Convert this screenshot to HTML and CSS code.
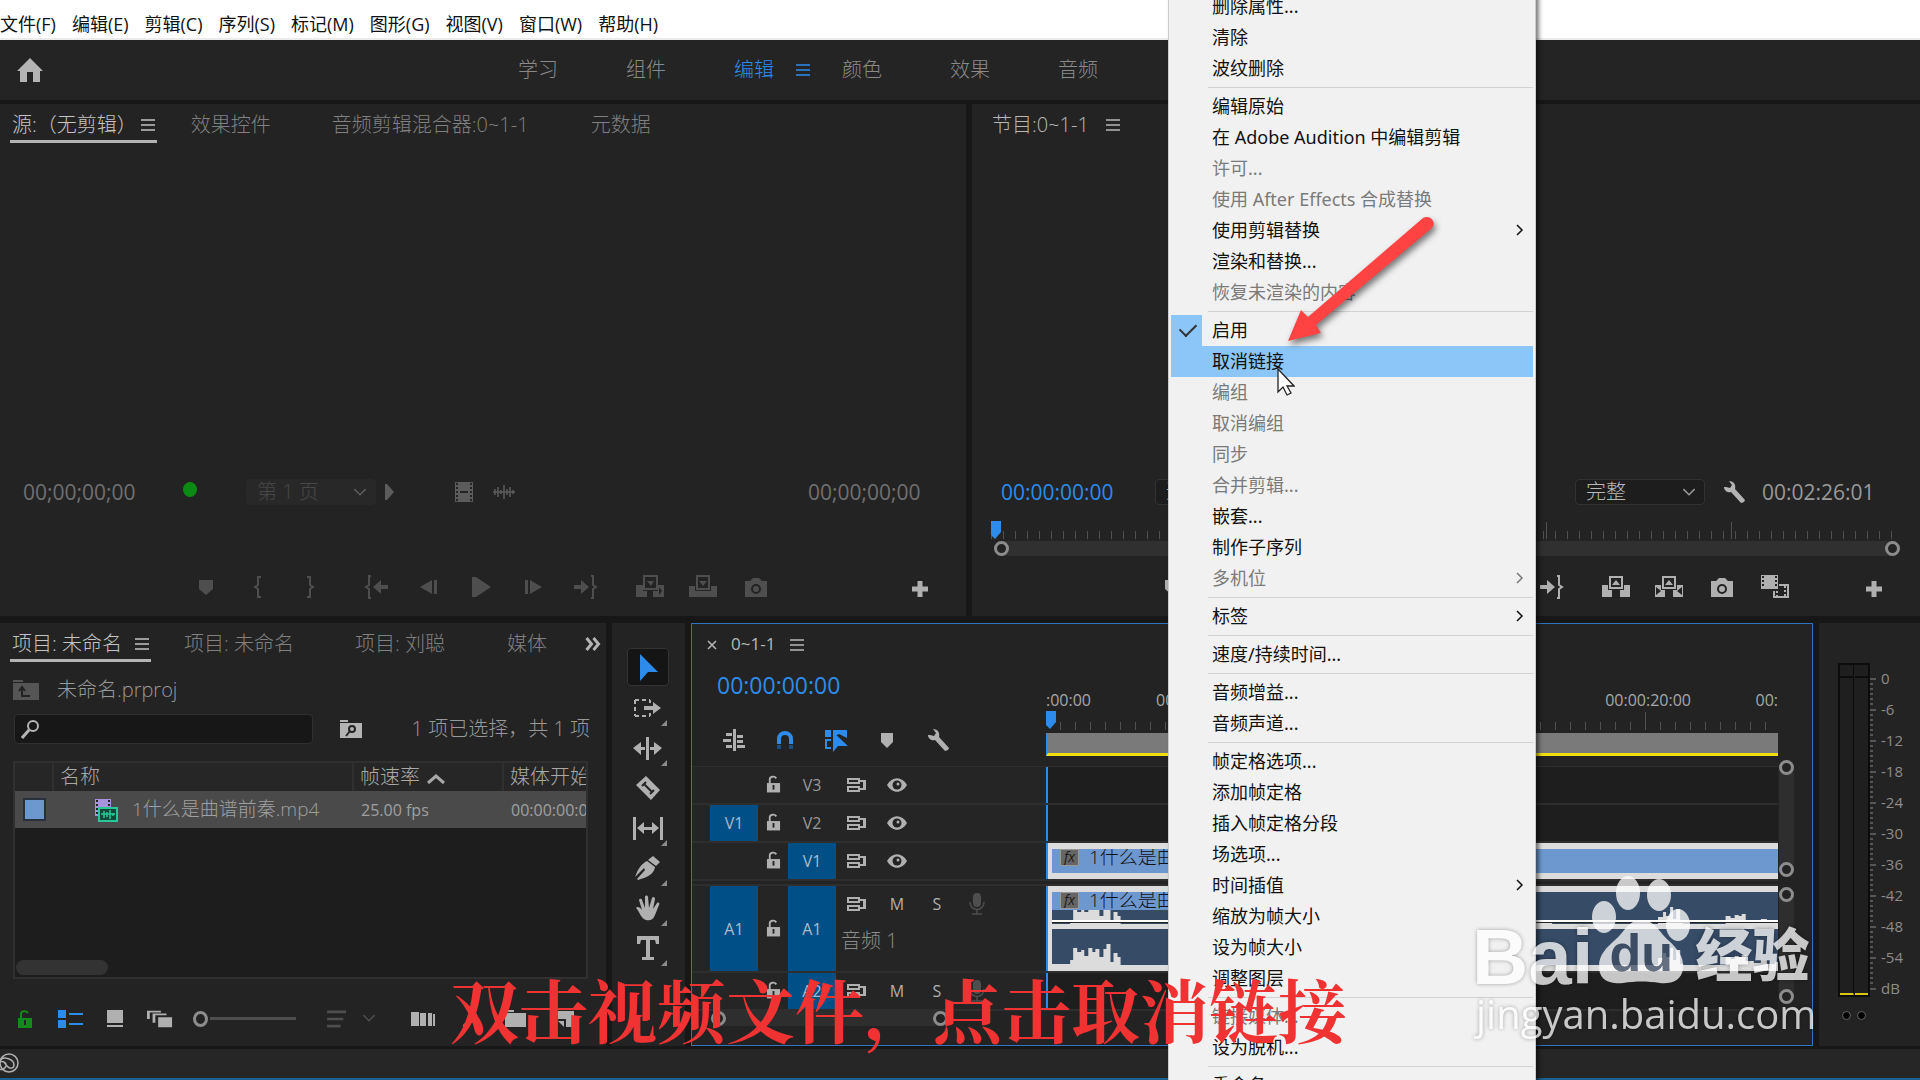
FILE: index.html
```html
<!DOCTYPE html>
<html lang="zh-CN">
<head>
    <meta charset="UTF-8">
    <meta name="viewport" content="width=device-width, initial-scale=1.0">
    <title>未命名.prproj</title>
    <link rel="stylesheet" href="styles.css">
</head>
<body>

<!-- 图标 -->
<svg class="symbols" aria-hidden="true">
    <symbol id="i-menu" viewBox="0 0 14 14"><path d="M0 2h14M0 7h14M0 12h14" stroke="currentColor" stroke-width="1.500"/></symbol>
    <symbol id="i-chev" viewBox="0 0 12 8"><path d="M1 1l5 5 5-5" fill="none" stroke="currentColor" stroke-width="1.3"/></symbol>
    <symbol id="i-sub" viewBox="0 0 8 12"><path d="M1 1l5 5-5 5" fill="none" stroke="currentColor" stroke-width="1.5"/></symbol>
    <symbol id="i-marker" viewBox="0 0 30 24"><path d="M8 5h14v9l-7 6-7-6z" fill="currentColor"/></symbol>
    <symbol id="i-in" viewBox="0 0 30 24"><path d="M18 2h-3v8l-3 2 3 2v8h3" fill="none" stroke="currentColor" stroke-width="2"/></symbol>
    <symbol id="i-out" viewBox="0 0 30 24"><path d="M12 2h3v8l3 2-3 2v8h-3" fill="none" stroke="currentColor" stroke-width="2"/></symbol>
    <symbol id="i-goin" viewBox="0 0 30 24"><path d="M9 1H7v9l-3 2 3 2v9h2" fill="none" stroke="currentColor" stroke-width="2"/><path d="M11 12l8-7v5h7v4h-7v5z" fill="currentColor"/></symbol>
    <symbol id="i-goout" viewBox="0 0 30 24"><path d="M21 1h2v9l3 2-3 2v9h-2" fill="none" stroke="currentColor" stroke-width="2"/><path d="M19 12l-8-7v5H4v4h7v5z" fill="currentColor"/></symbol>
    <symbol id="i-back" viewBox="0 0 30 24"><path d="M6 12l12-7v14zM20 5h3v14h-3z" fill="currentColor"/></symbol>
    <symbol id="i-play" viewBox="0 0 30 24"><path d="M6 2h4l15 10-15 10H6z" fill="currentColor"/></symbol>
    <symbol id="i-fwd" viewBox="0 0 30 24"><path d="M24 12L12 5v14zM7 5h3v14H7z" fill="currentColor"/></symbol>
    <symbol id="i-insert" viewBox="0 0 30 24"><path d="M9 1h13v13H9z" fill="none" stroke="currentColor" stroke-width="2"/><path d="M1 10h7v6h4v6H1zM18 16h5v-6h6v12H18zM12 6h7l-3 5z" fill="currentColor"/><path d="M24 12l3 4-3 4z" class="hole"/></symbol>
    <symbol id="i-over" viewBox="0 0 30 24"><path d="M9 1h12v13H9z" fill="none" stroke="currentColor" stroke-width="2"/><path d="M1 11h6v5h16v-5h6v11H1zM11 6h8l-4 5z" fill="currentColor"/></symbol>
    <symbol id="i-lift" viewBox="0 0 30 24"><path d="M9 2h12v11H9z" fill="none" stroke="currentColor" stroke-width="2"/><path d="M1 10h6v5h4v7H1zM23 10h6v12H19v-7h4zM11 10h8l-4-5z" fill="currentColor"/></symbol>
    <symbol id="i-extract" viewBox="0 0 30 24"><path d="M9 2h12v11H9z" fill="none" stroke="currentColor" stroke-width="2"/><path d="M1 10h6v5h4v7H1zM23 10h6v12H19v-7h4zM11 10h8l-4-5z" fill="currentColor"/><path d="M2 12l5 4-5 4zM28 12l-5 4 5 4z" class="hole"/></symbol>
    <symbol id="i-camera" viewBox="0 0 30 24"><path d="M4 6h5l3-3h6l3 3h5v16H4z" fill="currentColor"/><circle cx="15" cy="14" r="4" class="hole-ring"/></symbol>
    <symbol id="i-compare" viewBox="0 0 30 24"><path d="M1 0h17v14H1z" fill="currentColor"/><path d="M3 1v12M16 1v12" class="hole-dash"/><path d="M19 10h9v12H14v-6" fill="none" stroke="currentColor" stroke-width="2"/><path d="M17 16v6M25 11v11" stroke="currentColor" stroke-width="2" stroke-dasharray="2 2"/></symbol>
    <symbol id="i-plus" viewBox="0 0 30 24"><path d="M7 14h16M15 6v16" stroke="currentColor" stroke-width="5"/></symbol>
    <symbol id="i-wrench" viewBox="0 0 24 24"><path d="M2 7c0 4 4 6 7 5l10 11 3-1 1-2L13 9c1-4-1-8-6-8l3 4-2 3-4-1z" fill="currentColor"/></symbol>
    <symbol id="i-lock" viewBox="0 0 16 18"><path d="M1 8h14v10H1z" fill="currentColor"/><path d="M4 9V4c0-3 5-4 7-1" fill="none" stroke="currentColor" stroke-width="2"/><path d="M8 10v5" class="hole-line"/></symbol>
    <symbol id="i-sync" viewBox="0 0 20 16"><path d="M1 2h11v4H1zM1 10h11v4H1zM12 4h3M12 12h3" fill="none" stroke="currentColor" stroke-width="2"/><path d="M13 3h6v10h-6v-2h3V5h-3z" fill="currentColor"/></symbol>
    <symbol id="i-eye" viewBox="0 0 20 14"><path d="M0 7c5-9 15-9 20 0-5 9-15 9-20 0z" fill="currentColor"/><circle cx="10" cy="7" r="4.500" class="hole"/><circle cx="11" cy="6" r="1.500" fill="currentColor"/></symbol>
    <symbol id="i-mic" viewBox="0 0 16 22"><rect x="4" y="0" width="8" height="14" rx="4" fill="currentColor"/><path d="M1 9c0 10 14 10 14 0M8 17v4M3 21h10" fill="none" stroke="currentColor" stroke-width="1.500"/></symbol>
    <symbol id="i-mag" viewBox="0 0 20 20"><circle cx="12" cy="7" r="5" fill="none" stroke="currentColor" stroke-width="2"/><path d="M8 11l-7 8" stroke="currentColor" stroke-width="3"/></symbol>
</svg>

<nav class="menubar">
    <button>文件(F)</button>
    <button>编辑(E)</button>
    <button>剪辑(C)</button>
    <button>序列(S)</button>
    <button>标记(M)</button>
    <button>图形(G)</button>
    <button>视图(V)</button>
    <button>窗口(W)</button>
    <button>帮助(H)</button>
</nav>

<header class="workspaces">
    <button class="home" aria-label="主页"><svg viewBox="0 0 28 24"><path d="M14 0L1 13h3v11h7V14h6v10h7V13h3z" fill="currentColor"/></svg></button>
    <div class="ws-list">
        <button>学习</button>
        <button>组件</button>
        <button class="on">编辑<svg class="ham"><use href="#i-menu"/></svg></button>
        <button>颜色</button>
        <button>效果</button>
        <button>音频</button>
    </div>
</header>

<main>
    <div class="upper">
        <!-- 源监视器 -->
        <section class="panel monitor">
            <div class="tabs">
                <button class="tab on">源:（无剪辑）<svg class="ham"><use href="#i-menu"/></svg></button>
                <button class="tab t-fx">效果控件</button>
                <button class="tab t-mix">音频剪辑混合器:0~1-1</button>
                <button class="tab t-meta">元数据</button>
            </div>
            <div class="screen"></div>
            <div class="info off">
                <span class="tc">00;00;00;00</span>
                <span class="led"></span>
                <div class="pick dim">
                    <select aria-label="页"><option>第 1 页</option></select>
                    <svg class="chev"><use href="#i-chev"/></svg>
                </div>
                <svg class="tri" viewBox="0 0 9 16"><path d="M0 0h2l7 8-7 8H0z" fill="currentColor"/></svg>
                <svg class="film" viewBox="0 0 18 20"><path d="M0 0h18v20H0z" fill="currentColor"/><path d="M2 1v18M16 1v18" class="hole-dash"/><path d="M5 10h8" class="hole-line"/></svg>
                <svg class="wave" viewBox="0 0 22 14"><path d="M0 7h22M2 4v6M5 2v10M8 5v4M11 0v14M14 4v6M17 2v10M20 5v4" fill="none" stroke="currentColor" stroke-width="1.500"/></svg>
                <span class="tc end">00;00;00;00</span>
            </div>
            <div class="transport off">
                <div class="grp">
                    <button aria-label="添加标记"><svg><use href="#i-marker"/></svg></button>
                    <button aria-label="标记入点"><svg><use href="#i-in"/></svg></button>
                    <button aria-label="标记出点"><svg><use href="#i-out"/></svg></button>
                </div>
                <div class="grp">
                    <button aria-label="转到入点"><svg><use href="#i-goin"/></svg></button>
                    <button aria-label="后退一帧"><svg><use href="#i-back"/></svg></button>
                    <button aria-label="播放"><svg><use href="#i-play"/></svg></button>
                    <button aria-label="前进一帧"><svg><use href="#i-fwd"/></svg></button>
                    <button aria-label="转到出点"><svg><use href="#i-goout"/></svg></button>
                </div>
                <div class="grp edit">
                    <button aria-label="插入"><svg><use href="#i-insert"/></svg></button>
                    <button aria-label="覆盖"><svg><use href="#i-over"/></svg></button>
                    <button aria-label="导出帧"><svg><use href="#i-camera"/></svg></button>
                </div>
                <button class="more" aria-label="按钮编辑器"><svg><use href="#i-plus"/></svg></button>
            </div>
        </section>

        <!-- 节目监视器 -->
        <section class="panel monitor program">
            <div class="tabs">
                <button class="tab">节目:0~1-1<svg class="ham"><use href="#i-menu"/></svg></button>
            </div>
            <div class="screen"></div>
            <div class="info">
                <span class="tc blue">00:00:00:00</span>
                <div class="pick fit">
                    <select aria-label="缩放级别"><option>适合</option></select>
                </div>
                <div class="pick quality">
                    <select aria-label="回放分辨率"><option>完整</option></select>
                    <svg class="chev"><use href="#i-chev"/></svg>
                </div>
                <button class="wrench" aria-label="设置"><svg><use href="#i-wrench"/></svg></button>
                <span class="tc">00:02:26:01</span>
            </div>
            <div class="ruler">
                <svg class="head" viewBox="0 0 10 18"><path d="M0 0h10v11l-6 7-4-4z" fill="#2d8ceb"/></svg>
                <div class="zoombar"><i class="knob"></i><i class="knob"></i></div>
            </div>
            <div class="transport">
                <div class="grp">
                    <button aria-label="添加标记"><svg><use href="#i-marker"/></svg></button>
                    <button aria-label="标记入点"><svg><use href="#i-in"/></svg></button>
                    <button aria-label="标记出点"><svg><use href="#i-out"/></svg></button>
                </div>
                <div class="grp">
                    <button aria-label="转到入点"><svg><use href="#i-goin"/></svg></button>
                    <button aria-label="后退一帧"><svg><use href="#i-back"/></svg></button>
                    <button aria-label="播放"><svg><use href="#i-play"/></svg></button>
                    <button aria-label="前进一帧"><svg><use href="#i-fwd"/></svg></button>
                    <button aria-label="转到出点"><svg><use href="#i-goout"/></svg></button>
                </div>
                <div class="grp edit">
                    <button aria-label="提升"><svg><use href="#i-lift"/></svg></button>
                    <button aria-label="提取"><svg><use href="#i-extract"/></svg></button>
                    <button aria-label="导出帧"><svg><use href="#i-camera"/></svg></button>
                    <button aria-label="比较视图"><svg><use href="#i-compare"/></svg></button>
                </div>
                <button class="more" aria-label="按钮编辑器"><svg><use href="#i-plus"/></svg></button>
            </div>
        </section>
    </div>

    <div class="lower">
        <!-- 项目面板 -->
        <section class="panel project">
            <div class="tabs">
                <button class="tab on">项目: 未命名<svg class="ham"><use href="#i-menu"/></svg></button>
                <button class="tab">项目: 未命名</button>
                <button class="tab t-liu">项目: 刘聪</button>
                <button class="tab">媒体</button>
                <button class="over" aria-label="更多"><svg viewBox="0 0 16 14"><path d="M1 1l5 6-5 6M8 1l5 6-5 6" fill="none" stroke="currentColor" stroke-width="3"/></svg></button>
            </div>
            <div class="crumb">
                <svg viewBox="0 0 26 20"><path d="M0 0h10v2H0zM0 3h26v17H0z" fill="#555"/><path d="M9 8v8h8M6 11l3-4 3 4" fill="none" stroke="#222" stroke-width="2"/></svg>
                <span>未命名.prproj</span>
            </div>
            <div class="find">
                <label class="search">
                    <svg><use href="#i-mag"/></svg>
                    <input type="text" aria-label="搜索">
                </label>
                <button aria-label="从查询创建新的搜索素材箱"><svg viewBox="0 0 22 18"><path d="M0 0h8v2H0zM0 3h22v15H0z" fill="currentColor"/><circle cx="12" cy="9" r="3" class="hole-ring"/><path d="M10 11l-4 5" class="hole-line"/></svg></button>
                <span>1 项已选择，共 1 项</span>
            </div>
            <div class="bin">
                <table>
                    <thead>
                    <tr><th class="c-label"></th><th class="c-name">名称</th><th class="c-rate">帧速率 <svg viewBox="0 0 18 10"><path d="M1 9l8-7 8 7" fill="none" stroke="currentColor" stroke-width="3"/></svg></th><th>媒体开始</th></tr>
                    </thead>
                    <tbody>
                    <tr>
                        <td><i class="swatch"></i></td>
                        <td class="file"><svg viewBox="0 0 24 24"><path d="M1 1h16v17H1z" fill="#a893e0"/><path d="M3 2v16M15 2v16" class="hole-dash"/><path d="M5 10h18v13H5z" fill="#124838" stroke="#27c79a" stroke-width="2"/><path d="M7 16h14M10 13v7M13 14v5M16 12v9M19 15v3" stroke="#27c79a" stroke-width="1.500"/></svg>1什么是曲谱前秦.mp4</td>
                        <td>25.00 fps</td>
                        <td>00:00:00:00</td>
                    </tr>
                    </tbody>
                </table>
                <div class="hscroll"></div>
            </div>
            <div class="binbar">
                <button class="green" aria-label="可写"><svg class="s16"><use href="#i-lock"/></svg></button>
                <button class="blue" aria-label="列表视图"><svg viewBox="0 0 26 18"><path d="M0 0h8v8H0zM0 10h8v8H0zM11 3h14v2H11zM11 13h14v2H11z" fill="currentColor"/></svg></button>
                <button aria-label="图标视图"><svg viewBox="0 0 26 18"><path d="M5 0h16v13H5zM5 15h16v2H5z" fill="currentColor"/></svg></button>
                <button aria-label="自由变换视图"><svg viewBox="0 0 28 18"><path d="M0 0h15v2H3v7H0zM6 3h15v2H9v8H6zM12 7h15v11H12z" fill="currentColor"/></svg></button>
                <input type="range" min="0" max="100" value="0" aria-label="缩放">
                <button class="faint" aria-label="排序图标"><svg viewBox="0 0 26 20"><path d="M2 2h21M2 10h18M2 18h15" stroke="currentColor" stroke-width="3"/></svg></button>
                <button class="faint" aria-label="排序"><svg class="chev"><use href="#i-chev"/></svg></button>
                <button class="auto" aria-label="自动匹配序列"><svg viewBox="0 0 26 18"><path d="M1 2h8v14H1zM10 3h6v13h-6zM18 3h4v13h-4zM23 4h2v12h-2z" fill="currentColor"/></svg></button>
                <button aria-label="查找"><svg class="s16"><use href="#i-mag"/></svg></button>
                <button aria-label="新建素材箱"><svg viewBox="0 0 26 18"><path d="M2 0h9v2H2zM2 3h21v14H2z" fill="currentColor"/></svg></button>
                <button aria-label="新建项"><svg viewBox="0 0 26 18"><path d="M5 1h16v16h-8v-8H5z" fill="currentColor"/><path d="M5 11l6 6v-6z" fill="currentColor"/></svg></button>
                <button aria-label="清除"><svg viewBox="0 0 26 18"><path d="M5 3h16M10 1h6M7 4v13h12V4" fill="none" stroke="currentColor" stroke-width="2"/></svg></button>
            </div>
        </section>

        <!-- 工具栏 -->
        <section class="panel tools">
            <button class="on" aria-label="选择工具"><svg viewBox="0 0 32 32"><path d="M8 3v27l8-9h10z" fill="currentColor"/></svg></button>
            <button class="sub" aria-label="向前选择轨道工具"><svg viewBox="0 0 32 32"><path d="M3 8h15M3 24h15M3 8v16M18 8v3M18 21v3" fill="none" stroke="currentColor" stroke-width="2" stroke-dasharray="4 3"/><path d="M12 14h9v-4l8 6-8 6v-4h-9z" fill="currentColor"/></svg></button>
            <button class="sub" aria-label="波纹编辑工具"><svg viewBox="0 0 32 32"><path d="M14 5h3v23h-3zM1 16l8-6v5h4v3H9v5zM30 16l-8-6v5h-4v3h4v5z" fill="currentColor"/></svg></button>
            <button aria-label="剃刀工具"><svg viewBox="0 0 32 32"><path d="M4 13l10-9 14 14-9 10z" fill="currentColor"/><path d="M12 12l8 8M10 14l4-4M18 22l4-4" class="hole-line"/></svg></button>
            <button class="sub" aria-label="外滑工具"><svg viewBox="0 0 32 32"><path d="M1 5h3v23H1zM28 5h3v23h-3zM5 16l7-6v5h8v-5l7 6-7 6v-4h-8v4z" fill="currentColor"/></svg></button>
            <button class="sub" aria-label="钢笔工具"><svg viewBox="0 0 32 32"><path d="M21 4l7 6-4 4-8-6zM15 9l8 6c-1 7-7 10-17 13l-1-1 8-9-1-2-9 9C6 17 9 12 15 9z" fill="currentColor"/></svg></button>
            <button class="sub" aria-label="手形工具"><svg viewBox="0 0 32 32"><path d="M14 28C9 27 8 20 4 16c1-2 4-1 6 2L7 8c1-2 3-1 3 0l3 8V5c0-2 3-2 3 0l1 11 3-10c1-2 3-1 3 1l-2 10 4-6c2-1 3 0 2 2l-4 10c-2 5-5 6-9 5z" fill="currentColor"/></svg></button>
            <button class="sub" aria-label="文字工具"><svg viewBox="0 0 32 32"><path d="M5 4h22v8h-3l-1-4h-5v17h4v3H10v-3h4V8H9l-1 4H5z" fill="currentColor"/></svg></button>
        </section>

        <!-- 时间轴 -->
        <section class="panel timeline">
            <div class="tl-tab">
                <button aria-label="关闭"><svg class="x" viewBox="0 0 10 10"><path d="M1 1l8 8M9 1l-8 8" stroke="currentColor" stroke-width="1.500"/></svg></button>
                <span>0~1-1</span>
                <svg class="ham"><use href="#i-menu"/></svg>
            </div>
            <div class="tl-top">
                <div class="tl-left">
                    <span class="bigtc">00:00:00:00</span>
                    <div class="opts">
                        <button aria-label="嵌套"><svg viewBox="0 0 24 24"><path d="M11 1h3v22h-3zM4 5h6v3H4zM1 11h8v3H1zM15 7h6v3h-6zM15 12h6v3h-6zM4 17h6v3H4zM15 17h8v3h-8z" fill="currentColor"/></svg></button>
                        <button class="blue" aria-label="对齐"><svg viewBox="0 0 24 24"><path d="M6 16v-5c0-8 12-8 12 0v5" fill="none" stroke="currentColor" stroke-width="4"/><path d="M4 17h4v4H4zM16 17h4v4h-4z" fill="#1b4f84"/></svg></button>
                        <button class="blue" aria-label="链接选择项"><svg viewBox="0 0 24 24"><path d="M1 2h6v7H1zM9 2h14v8l-8-4-6 3z" fill="currentColor"/><path d="M7 12H2v8h5" fill="none" stroke="currentColor" stroke-width="2"/><path d="M9 4v20l5-6h10z" fill="currentColor"/></svg></button>
                        <button aria-label="添加标记"><svg viewBox="0 0 24 24"><path d="M6 5h12v9l-6 6-6-6z" fill="currentColor"/></svg></button>
                        <button aria-label="时间轴显示设置"><svg><use href="#i-wrench"/></svg></button>
                    </div>
                </div>
                <div class="tl-ruler">
                    <div class="times"><span class="t0">:00:00</span><span class="t1">00:00:05:00</span><span class="t2">00:00:20:00</span><span class="t3">00:</span></div>
                    <div class="ticks"></div>
                    <div class="work"></div>
                    <svg class="head" viewBox="0 0 10 18"><path d="M0 0h10v11l-6 7-4-4z" fill="#2d8ceb"/></svg>
                </div>
            </div>
            <div class="tracks">
                <div class="rows">
                    <div class="track">
                        <div class="th"><span></span><svg class="lock"><use href="#i-lock"/></svg><b>V3</b><svg class="sync"><use href="#i-sync"/></svg><svg class="eye"><use href="#i-eye"/></svg></div>
                        <div class="lane"></div>
                    </div>
                    <div class="track">
                        <div class="th"><span class="sel">V1</span><svg class="lock"><use href="#i-lock"/></svg><b>V2</b><svg class="sync"><use href="#i-sync"/></svg><svg class="eye"><use href="#i-eye"/></svg></div>
                        <div class="lane"></div>
                    </div>
                    <div class="track">
                        <div class="th"><span></span><svg class="lock"><use href="#i-lock"/></svg><b class="sel">V1</b><svg class="sync"><use href="#i-sync"/></svg><svg class="eye"><use href="#i-eye"/></svg></div>
                        <div class="lane"><div class="clip video"><em>fx</em>1什么是曲谱前秦.mp4</div></div>
                    </div>
                    <div class="split"></div>
                    <div class="track tall">
                        <div class="th"><span class="sel">A1</span><svg class="lock"><use href="#i-lock"/></svg><b class="sel">A1</b>
                            <div class="ath">
                                <div class="arow"><svg class="sync"><use href="#i-sync"/></svg><button>M</button><button>S</button><svg class="mic"><use href="#i-mic"/></svg></div>
                                <div class="aname">音频 1</div>
                            </div>
                        </div>
                        <div class="lane">
                            <div class="clip audio">
                                <div class="wavebox">
                                    <div class="name"><em>fx</em>1什么是曲谱前秦.mp4</div>
                                    <svg viewBox="0 0 720 33" preserveAspectRatio="none"><path d="M0 33v-1h18v-4h3v-12h4v4h4v-5h3v5h4v-6h4v4h3v-3h4v9h4v-6h3v-3h4v14h3v-9h4v4h3v8h52v-12h6v12h310v-2h60v2h105v-7h5v-5h3v4h4v-9h3v12h3v-10h4v14h3v1h42v-8h5v2h4v-3h4v1h3v-2h4v6h8v2h7v-3h6v4h8v-2h5v2h4v-3h5v4h75v2z" fill="#dcdcdc"/></svg>
                                </div>
                                <div class="wavebox">
                                    <svg viewBox="0 0 720 33" preserveAspectRatio="none"><path d="M0 33v-1h18v-4h3v-12h4v4h4v-2h3v6h4v-8h4v4h3v-3h4v8h4v-8h3v-5h4v18h3v-9h4v4h3v8h52v-16h6v16h475v-7h5v-5h3v4h4v-9h3v12h3v-10h4v14h3v1h42v-8h5v2h4v-3h4v1h3v-2h4v6h8v2h7v-3h6v4h8v-2h5v2h4v-3h5v4h75v3z" fill="#dcdcdc"/></svg>
                                </div>
                            </div>
                        </div>
                    </div>
                    <div class="track">
                        <div class="th"><span></span><svg class="lock"><use href="#i-lock"/></svg><b class="sel">A2</b>
                            <div class="ath">
                                <div class="arow"><svg class="sync"><use href="#i-sync"/></svg><button>M</button><button>S</button><svg class="mic"><use href="#i-mic"/></svg></div>
                            </div>
                        </div>
                        <div class="lane"></div>
                    </div>
                </div>
                <div class="vbars">
                    <div class="vbar"><i class="knob"></i><i class="knob"></i></div>
                    <div class="vbar"><i class="knob"></i><i class="knob"></i></div>
                </div>
            </div>
            <div class="hbar"><div><i class="knob"></i><i class="knob"></i></div></div>
        </section>

        <!-- 音频仪表 -->
        <section class="panel meter">
            <div class="meter-row">
                <div class="levels"><i></i><i></i></div>
                <svg class="scale"><defs><pattern id="db" width="8" height="31" patternUnits="userSpaceOnUse"><path d="M0 1h6M0 6h3M0 11h3M0 16h3M0 21h3M0 26h3" stroke="#8a8a8a" stroke-width="1"/></pattern></defs><rect width="8" height="312" fill="url(#db)"/></svg>
                <ul><li>0</li><li>-6</li><li>-12</li><li>-18</li><li>-24</li><li>-30</li><li>-36</li><li>-42</li><li>-48</li><li>-54</li><li>dB</li></ul>
            </div>
            <div class="solo"><i></i><i></i></div>
        </section>
    </div>
</main>

<footer><svg viewBox="0 0 24 20"><g fill="none" stroke="#b0b0b0" stroke-width="1.500"><circle cx="13" cy="10" r="9"/><path d="M0 15c5 3 9 1 10-2 1-4-4-6-8-3M4 7c4-4 14-1 14 5 0 4-5 4-7 1l-3-4"/></g></svg></footer>

<!-- 右键菜单 -->
<div class="context">
    <button>删除属性...</button>
    <button>清除</button>
    <button>波纹删除</button>
    <hr>
    <button>编辑原始</button>
    <button>在 Adobe Audition 中编辑剪辑</button>
    <button disabled>许可...</button>
    <button disabled>使用 After Effects 合成替换</button>
    <button>使用剪辑替换<svg><use href="#i-sub"/></svg></button>
    <button>渲染和替换...</button>
    <button disabled>恢复未渲染的内容</button>
    <hr>
    <button class="checked">启用</button>
    <button class="hover">取消链接</button>
    <button disabled>编组</button>
    <button disabled>取消编组</button>
    <button disabled>同步</button>
    <button disabled>合并剪辑...</button>
    <button>嵌套...</button>
    <button>制作子序列</button>
    <button disabled>多机位<svg><use href="#i-sub"/></svg></button>
    <hr>
    <button>标签<svg><use href="#i-sub"/></svg></button>
    <hr>
    <button>速度/持续时间...</button>
    <hr>
    <button>音频增益...</button>
    <button>音频声道...</button>
    <hr>
    <button>帧定格选项...</button>
    <button>添加帧定格</button>
    <button>插入帧定格分段</button>
    <button>场选项...</button>
    <button>时间插值<svg><use href="#i-sub"/></svg></button>
    <button>缩放为帧大小</button>
    <button>设为帧大小</button>
    <button>调整图层</button>
    <hr>
    <button disabled>链接媒体...</button>
    <button>设为脱机...</button>
    <hr>
    <button>重命名...</button>
</div>

<svg class="arrow" viewBox="0 0 156 136"><path d="M5 128L18 97l7 7L140 5c7-4 14 4 9 10L33 112l5 8z" fill="#ff4343"/></svg>
<svg class="cursor" viewBox="0 0 18 28"><path d="M1 1v23l5-5 4 8 4-2-4-7h7z" fill="#fff" stroke="#222" stroke-width="1.300"/></svg>

<div class="watermark">
    <div class="brand">
        <span class="bai">Bai</span>
        <span class="paw">
            <svg viewBox="0 0 100 110"><g fill="#fff"><ellipse cx="13" cy="41" rx="12" ry="16"/><ellipse cx="37" cy="17" rx="12" ry="17"/><ellipse cx="68" cy="19" rx="12" ry="16"/><ellipse cx="87" cy="49" rx="12" ry="16"/><path d="M50 44c14 0 18 12 27 20 10 9 16 17 15 28-1 13-12 16-23 15-13-2-24-2-37 0-13 1-24-2-24-17 0-11 7-18 16-26 9-7 13-20 26-20z"/></g></svg>
            <span class="du">du</span>
        </span>
        <span class="jy">经验</span>
    </div>
    <div class="url">jingyan.baidu.com</div>
</div>

<div class="subtitle">双击视频文件，点击取消链接</div>

</body>
</html>
```

FILE: styles.css
```css
*{box-sizing: border-box;}
html{margin: 0; padding: 0;}
body{margin: 0; min-height: 100vh; display: flex; flex-direction: column; position: relative; overflow: hidden; background: #171717; color: #a8a8a8; font-family: "Open Sans", "Noto Sans CJK SC", sans-serif; font-size: 20px; font-weight: 300; line-height: 24px;}
button{margin: 0; padding: 0; border: 0; background: none; color: inherit; font: inherit; white-space: nowrap; display: flex; align-items: center;}
svg{display: block; flex: none;}
.symbols{position: absolute; width: 0; height: 0;}
.hole{fill: #232323;}
.hole-ring{fill: none; stroke: #232323; stroke-width: 2;}
.hole-line{fill: none; stroke: #232323; stroke-width: 2;}
.hole-dash{fill: none; stroke: #232323; stroke-width: 2; stroke-dasharray: 2 2;}
.ham{width: 14px; height: 14px;}
.chev{width: 14px; height: 9px;}
.blue{color: #2d8ceb;}
.knob{display: block; flex: none; width: 15px; height: 15px; border: 3px solid #8c8c8c; border-radius: 50%; background: #232323;}

/* 菜单栏 */
.menubar{height: 40px; padding-top: 10px; display: flex; align-items: center; gap: 16px; background: #fff; color: #111; font-size: 18px; font-weight: 400; border-bottom: 2px solid #ececec;}
.workspaces{height: 64px; display: flex; align-items: center; background: #242424; border-bottom: 4px solid #171717; color: #8a8a8a;}
.home{margin-left: 16px; width: 484px; color: #b4b4b4;}
.home svg{width: 28px; height: 24px;}
.ws-list{display: flex;}
.ws-list button{width: 108px; padding-left: 18px; gap: 22px;}
.ws-list .on{color: #2d8ceb;}

main{flex: 1; display: grid; grid-template-rows: 512fr 423fr; gap: 7px; min-height: 0;}
.upper{display: grid; grid-template-columns: 966fr 948fr; gap: 6px; min-height: 0;}
.lower{display: grid; grid-template-columns: 606fr 73px 1122fr 101px; gap: 6px; min-height: 0;}
.panel{background: #232323; min-width: 0; display: flex; flex-direction: column;}

.tabs{display: flex; align-items: center; height: 42px; padding-left: 10px; color: #808080;}
.tab{height: 36px; padding: 0 2px;}
.tab .ham{margin-left: 13px;}
.tab.on{color: #c4c4c4; border-bottom: 3px solid #b4b4b4; padding-top: 3px;}

/* 监视器 */
.monitor .tab.on .ham{margin-left: 4px;}
.t-fx{margin-left: 32px;}
.t-mix{margin-left: 57px;}
.t-meta{margin-left: 58px;}
.program .tabs{padding-left: 18px; color: #b8b8b8;}
.program .tab .ham{margin-left: 17px;}
.screen{flex: 1;}
.info{display: flex; align-items: center; height: 28px; padding: 0 44px 0 23px; color: #999; font-weight: 400;}
.info.off{color: #5c5c5c;}
.tc{font-size: 21px; width: 114px; white-space: nowrap;}
.off .tc{color: #707070;}
.tc.blue{color: #2d8ceb;}
.end{margin-left: auto;}
.led{width: 14px; height: 15px; margin: 0 49px 6px 46px; border-radius: 50%; background: #0b8a14;}
.pick{position: relative; width: 130px; height: 26px; border: 1px solid #333; border-radius: 4px; background: #1d1d1d; display: flex; align-items: center;}
.pick select{appearance: none; width: 100%; height: 24px; padding: 0 10px; border: 0; background: none; color: #b8b8b8; font: inherit; font-size: 20px; font-weight: 300; line-height: 24px;}
.pick .chev{position: absolute; right: 8px;}
.pick.dim{background: #282828; border-color: #282828;}
.pick.dim select{color: #484848;}
.tri{width: 9px; height: 16px; margin-left: 9px;}
.film{width: 18px; height: 20px; margin-left: 61px;}
.wave{width: 22px; height: 14px; margin-left: 20px;}
.program .info{padding-left: 29px;}
.pick.fit{margin-left: 40px;}
.pick.quality{margin-left: auto;}
.wrench{margin: 0 16px 0 17px; color: #b4b4b4;}
.wrench svg{width: 24px; height: 24px;}
.transport{display: flex; align-items: center; height: 60px; margin-top: 50px; padding: 2px 31px 0 191px; color: #b0b0b0;}
.program .transport{padding-left: 185px; margin-top: 0;}
.transport.off{color: #4e4e4e;}
.transport svg{width: 30px; height: 24px;}
.grp{display: flex; gap: 22px; margin-right: 37px;}
.grp + .grp{margin-right: 35px;}
.grp.edit{gap: 23px;}
.more{margin-left: auto; color: #b0b0b0;}
.ruler{position: relative; height: 50px; margin: 0 20px 0 19px; padding-top: 16px; display: flex; flex-direction: column;}
.ruler::before{content: ""; height: 20px; background: repeating-linear-gradient(90deg, #505050 0 1px, transparent 1px 185px), repeating-linear-gradient(90deg, #505050 0 1px, transparent 1px 12px) left bottom / 100% 8px no-repeat;}
.head{position: absolute; width: 10px; height: 18px; left: 0; top: 15px;}
.zoombar{height: 15px; margin: 2px 0 0 3px; border-radius: 8px; background: #303030; display: flex; justify-content: space-between;}

/* 项目 */
.project{overflow: hidden;}
.project .tabs{padding-right: 4px;}
.project .tab.on{margin-right: 31px;}
.t-liu{margin: 0 58px 0 57px;}
.over{margin-left: auto; color: #b4b4b4;}
.over svg{width: 17px; height: 14px;}
.crumb{display: flex; align-items: center; gap: 18px; height: 49px; padding: 0 13px; color: #999;}
.crumb svg{width: 26px; height: 20px;}
.find{display: flex; align-items: center; height: 30px; padding: 0 16px 0 14px; color: #999;}
.find > span{margin-left: auto; white-space: nowrap;}
.search{width: 299px; height: 30px; display: flex; align-items: center; padding: 0 6px; border: 1px solid #303030; border-radius: 4px; background: #171717; color: #b4b4b4; margin-right: 27px;}
.search svg{width: 20px; height: 20px;}
.search input{flex: 1; min-width: 0; border: 0; background: none; color: inherit; font: inherit; outline: 0;}
.find button{color: #b4b4b4;}
.find button svg{width: 22px; height: 18px;}
.bin{flex: 1; display: flex; flex-direction: column; margin: 17px 18px 0 13px; border: 2px solid #303030; background: #1d1d1d; overflow: hidden;}
table{width: 100%; table-layout: fixed; border-collapse: collapse;}
th{height: 28px; padding: 0 6px; text-align: left; font-weight: 300; background: #262626; border-right: 2px solid #303030; white-space: nowrap; overflow: hidden; color: #a8a8a8;}
th:last-child{border-right: 0;}
th svg{display: inline-block; width: 18px; height: 10px; margin-left: 2px;}
td{height: 37px; padding: 0 8px; background: #4a4a4a; color: #a0a0a0; font-size: 16px; font-weight: 400; white-space: nowrap; overflow: hidden;}
.c-label{width: 38px;}
.c-name{width: 300px;}
.c-rate{width: 150px;}
.swatch{display: block; width: 23px; height: 23px; border: 2px solid #28303c; background: #6d98cf;}
td.file{padding-left: 41px; font-size: 19px; font-weight: 300;}
.file svg{display: inline-block; width: 24px; height: 24px; margin-right: 14px; vertical-align: middle;}
.hscroll{width: 92px; height: 15px; margin: auto 0 2px 1px; border-radius: 8px; background: #333;}
.binbar{display: flex; align-items: center; height: 67px; padding: 12px 0 0 17px; color: #b0b0b0;}
.binbar svg{width: 26px; height: 18px;}
.binbar .s16{width: 16px;}
.binbar .chev{width: 14px; height: 9px;}
.binbar .green{color: #138a1a; margin-right: 25px;}
.binbar .blue{margin-right: 18px;}
.binbar .blue + button{margin-right: 19px;}
.binbar input{appearance: none; width: 103px; height: 16px; margin: 0 28px 0 20px; background: linear-gradient(#4e4e4e, #4e4e4e) 17px center / 86px 3px no-repeat;}
.binbar input::-webkit-slider-thumb{appearance: none; width: 15px; height: 16px; border: 3px solid #8c8c8c; border-radius: 50%; background: #232323;}
.binbar .faint{color: #4e4e4e; margin-right: 12px;}
.auto{margin: 0 27px 0 22px;}
.auto ~ button{margin-right: 24px;}

/* 工具 */
.tools{align-items: center; padding: 25px 2px 0 0;}
.tools button{position: relative; width: 42px; height: 37px; margin-bottom: 3px; flex: none; justify-content: center; color: #b0b0b0;}
.tools .on{height: 38px; background: #151515; border: 1px solid #333; border-radius: 4px; color: #2d8ceb;}
.tools svg{width: 32px; height: 32px;}
.tools .sub::after{content: ""; position: absolute; right: 2px; bottom: 0; border: 3px solid transparent; border-right-color: #8c8c8c; border-bottom-color: #8c8c8c;}

/* 时间轴 */
.timeline{border: 1px solid #2f74bd; overflow: hidden;}
.tl-tab{display: flex; align-items: center; height: 42px; padding-left: 15px; color: #b8b8b8; font-size: 17px; font-weight: 400;}
.tl-tab .x{width: 10px; height: 10px;}
.tl-tab span{margin: 0 15px 3px 14px;}
.tl-top{display: flex; height: 100px;}
.tl-left{width: 354px; flex: none; display: flex; flex-direction: column;}
.bigtc{margin: 4px 0 0 25px; font-size: 23px; line-height: 30px; font-weight: 400; color: #2d8ceb;}
.opts{display: flex; gap: 27px; padding: 28px 0 0 30px; color: #b0b0b0;}
.opts svg{width: 24px; height: 24px;}
.tl-ruler{position: relative; flex: 1; margin-right: 34px; overflow: hidden;}
.times{position: relative; height: 46px; font-size: 16px; font-weight: 400; color: #a8a8a8;}
.times span{position: absolute; top: 22px;}
.t0{left: 0;}
.t1{left: 110px;}
.t2{right: 87px;}
.t3{right: 0;}
.ticks{height: 18px; background: repeating-linear-gradient(90deg, transparent 0 14px, #505050 14px 15px) left bottom / 100% 8px no-repeat, repeating-linear-gradient(90deg, transparent 0 149px, #505050 149px 150px);}
.work{height: 23px; margin-top: 3px; background: #7a7a7a; border-bottom: 3px solid #f0e010; border-left: 2px solid #2d8ceb;}
.tl-ruler .head{top: 45px;}
.tracks{display: flex;}
.rows{flex: 1; border-top: 1px solid #2e2e2e; min-width: 0;}
.track{display: flex; height: 38px; border-bottom: 2px solid #2e2e2e;}
.track.tall{height: 87px;}
.split{height: 5px; border-bottom: 2px solid #2e2e2e;}
.th{width: 354px; flex: none; display: flex; align-items: center; padding-left: 18px; background: #252525; color: #b0b0b0; font-size: 16px;}
.th > span, .th > b{width: 48px; align-self: stretch; display: flex; align-items: center; justify-content: center; font-weight: 400; color: #999;}
.th .sel{background: #004f87; color: #a8bccb;}
.lock{width: 15px; height: 18px; margin: 0 7px 2px 8px;}
.th .sync{width: 20px; height: 16px; margin-left: 11px;}
.th .lock{flex: none;}
.eye{width: 20px; height: 14px; margin-left: 20px;}
.ath{flex: 1; align-self: stretch; display: flex; flex-direction: column;}
.arow{display: flex; align-items: center; height: 36px; font-weight: 400;}
.arow button{width: 20px; justify-content: center; margin-left: 20px;}
.arow svg.mic{width: 16px; height: 22px; margin-left: 22px; color: #4e4e4e;}
.aname{font-size: 20px; padding: 7px 0 0 5px; color: #8c8c8c;}
.lane{flex: 1; min-width: 0; background: #1e1e1e; border-left: 2px solid #2d8ceb;}
.clip{height: 36px; border: 6px solid #dcdcdc; border-width: 6px 0 6px 4px; background: #6d98cf; color: #111; font-size: 19px; line-height: 16px; white-space: nowrap; overflow: hidden; display: flex;}
.clip em{flex: none; width: 17px; height: 15px; margin: 1px 11px 0 9px; background: #666; outline: 1px solid #999; color: #1a1a1a; font-size: 14px; line-height: 14px; text-align: center; font-weight: 400;}
.clip.audio{height: 85px; flex-direction: column; justify-content: space-between; background: #dcdcdc;}
.wavebox{height: 33px; background: #364b66; position: relative; display: flex; align-items: flex-end;}
.wavebox + .wavebox{height: 36px;}
.wavebox svg{width: 100%; height: 33px;}
.wavebox .name{position: absolute; left: 0; top: 0; width: 240px; height: 18px; overflow: hidden; background: #6d98cf; display: flex;}
.wavebox:first-child::after{content: ""; position: absolute; left: 0; right: 0; bottom: 2px; height: 2px; background: #fff; border-bottom: 1px solid #222;}
.vbars{width: 34px; display: flex; flex-direction: column; align-items: flex-start; padding-left: 1px;}
.vbar{width: 15px; height: 117px; margin-top: -6px; border-radius: 8px; background: #2e2e2e; display: flex; flex-direction: column; justify-content: space-between;}
.vbar + .vbar{margin-top: 10px;}
.hbar div{width: 237px; height: 15px; margin-left: 19px; border-radius: 8px; background: #2e2e2e; display: flex; justify-content: space-between;}

/* 仪表 */
.meter{padding: 40px 0 0 19px;}
.meter-row{display: flex;}
.levels{width: 32px; height: 334px; border: 2px solid #0c0c0c; background: #1f1f1f; display: flex; flex-direction: row; gap: 1px;}
.levels i{flex: 1; border-bottom: 2px solid #d8c80c; background: linear-gradient(#0c0c0c, #0c0c0c) 0 11px / 100% 2px no-repeat;}
.levels i:first-child{border-right: 1px solid #0c0c0c;}
.scale{width: 8px; height: 312px; margin-top: 15px;}
ul{margin: 4px 0 0; padding: 0 0 0 3px; list-style: none; font-size: 15px; font-weight: 400; color: #8c8c8c;}
li{height: 31px; line-height: 22px;}
.solo{display: flex; gap: 6px; margin-top: 3px; padding-left: 4px;}
.solo i{width: 9px; height: 9px; border-radius: 50%; border: 1px solid #666; background: #000;}

footer{height: 34px; padding-bottom: 2px; border-top: 3px solid #171717; border-bottom: 2px solid #17608f; background: #262626; display: flex; align-items: center;}
footer svg{width: 24px; height: 20px; margin-left: -4px;}

/* 右键菜单 */
.context{position: absolute; left: 1168px; top: -9px; width: 368px; border: 1px solid #ccc; border-width: 0 1px; background: #f1f1f1; color: #111; font-family: "Noto Sans", "Noto Sans CJK SC", sans-serif; font-size: 18px; font-weight: 400; box-shadow: 3px 0 4px rgba(0,0,0,.5); padding: 0 2px;}
.context button{position: relative; width: 100%; height: 31px; padding: 0 0 2px 41px;}
.context button:disabled{color: #7a7a7a;}
.context hr{height: 1px; margin: 3px 0 3px 37px; border: 0; background: #d2d2d2;}
.context .hover{background: #8cc6f8;}
.context button svg{width: 8px; height: 12px; margin: 0 9px 0 auto;}
.context .checked{background: linear-gradient(#8cc6f8, #8cc6f8) left / 31px 100% no-repeat;}
.context .checked::before{content: ""; position: absolute; left: 9px; top: 8px; width: 14px; height: 8px; border: solid #333; border-width: 0 0 2px 2px; transform: rotate(-45deg);}

.arrow{position: absolute; left: 1283px; top: 213px; width: 156px; height: 136px; filter: drop-shadow(2px 4px 3px rgba(0,0,0,.5));}
.cursor{position: absolute; left: 1277px; top: 368px; width: 18px; height: 28px;}

.watermark{position: absolute; left: 1472px; top: 876px; color: #fff; opacity: .75; font-weight: 700; text-shadow: 0 0 4px rgba(0,0,0,.45);}
.brand{display: flex; align-items: flex-end; height: 110px;}
.bai{font-family: "Liberation Sans", sans-serif; font-size: 78px; line-height: 78px; margin-bottom: -10px;}
.paw{position: relative; width: 100px; height: 110px; margin-left: -2px;}
.paw svg{width: 100px; height: 110px;}
.du{position: absolute; left: 18px; top: 51px; font-family: "Liberation Sans", sans-serif; font-size: 52px; line-height: 52px; color: #3d4d63; text-shadow: none;}
.jy{font-family: "Noto Sans CJK SC", sans-serif; font-weight: 900; font-size: 57px; line-height: 57px; margin: 0 0 6px 4px;}
.url{font-size: 40px; line-height: 56px; font-weight: 400; padding-left: 4px;}

.subtitle{position: absolute; left: 450px; top: 967px; color: #f03232; font-family: "Noto Serif CJK SC", "Noto Sans CJK SC", serif; font-size: 69px; line-height: 84px; font-weight: 700; white-space: nowrap;}
```
